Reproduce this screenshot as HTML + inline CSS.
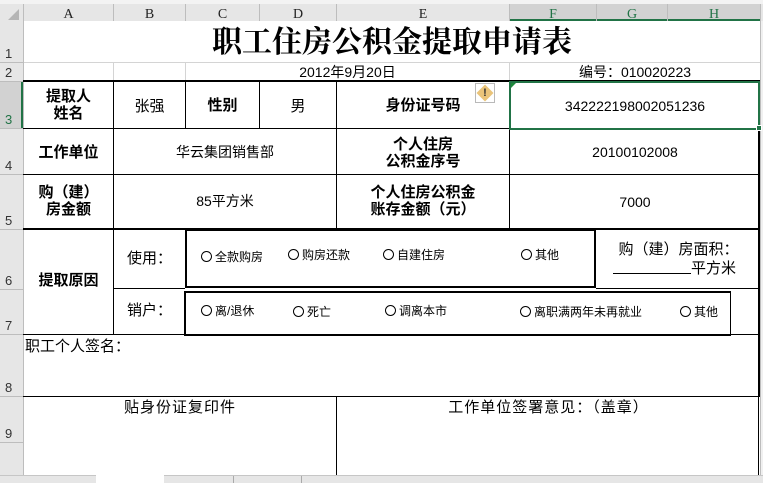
<!DOCTYPE html>
<html><head><meta charset="utf-8"><style>
*{margin:0;padding:0;box-sizing:border-box}
body{width:763px;height:483px;overflow:hidden;background:#fff;position:relative;font-family:"Liberation Sans","SimSun","WenQuanYi Zen Hei","Noto Sans CJK SC",sans-serif;color:#000}
.a{position:absolute}
.h{background:#e6e6e6;color:#222;font-family:"Liberation Serif",serif;font-size:12px;text-align:center}
.hl{position:absolute;background:#bdbdbd}
.g{position:absolute;background:#d4d4d4}
.k{position:absolute;background:#000}
.t{position:absolute;text-align:center;font-size:14px;line-height:17px;white-space:nowrap}
.b{font-weight:bold;font-size:15px}
.s{font-size:12px}
.o{display:inline-block;width:11px;height:11px;border:1px solid #000;border-radius:50%;vertical-align:-1px;margin-right:3px}
.rn{position:absolute;left:0;width:23px;font-size:13px;color:#333;text-align:left;padding-left:5px;font-family:"Liberation Sans",sans-serif}
</style></head><body>
<div class="a" style="left:0;top:0;width:763px;height:4px;background:#f3f3f3"></div>
<div class="a h" style="left:0;top:4px;width:763px;height:17px"></div>
<div class="a" style="left:509px;top:4px;width:251px;height:17px;background:#d2d2d2"></div>
<div class="a" style="left:509px;top:19px;width:251px;height:2px;background:#217346"></div>
<div class="a" style="left:8px;top:9px;width:0;height:0;border-left:11px solid transparent;border-bottom:11px solid #b5b5b5"></div>
<div class="a h" style="left:0;top:21px;width:23px;height:454px"></div>
<div class="a" style="left:0;top:81px;width:23px;height:47px;background:#d2d2d2"></div>
<div class="a" style="left:21px;top:81px;width:2px;height:47px;background:#217346"></div>
<div class="a" style="left:760px;top:21px;width:3px;height:454px;background:#f0f0f0"></div>
<div class="hl" style="left:23px;top:4px;width:1px;height:471px"></div>
<div class="hl" style="left:113px;top:4px;width:1px;height:17px"></div>
<div class="hl" style="left:185px;top:4px;width:1px;height:17px"></div>
<div class="hl" style="left:259px;top:4px;width:1px;height:17px"></div>
<div class="hl" style="left:336px;top:4px;width:1px;height:17px"></div>
<div class="hl" style="left:509px;top:4px;width:1px;height:17px"></div>
<div class="hl" style="left:596px;top:4px;width:1px;height:17px"></div>
<div class="hl" style="left:667px;top:4px;width:1px;height:17px"></div>
<div class="hl" style="left:760px;top:4px;width:1px;height:471px"></div>
<div class="t h" style="left:24px;top:6px;width:89px;background:none">A</div>
<div class="t h" style="left:114px;top:6px;width:71px;background:none">B</div>
<div class="t h" style="left:186px;top:6px;width:73px;background:none">C</div>
<div class="t h" style="left:260px;top:6px;width:76px;background:none">D</div>
<div class="t h" style="left:337px;top:6px;width:172px;background:none">E</div>
<div class="t h" style="left:510px;top:6px;width:86px;background:none;color:#217346">F</div>
<div class="t h" style="left:597px;top:6px;width:70px;background:none;color:#217346">G</div>
<div class="t h" style="left:668px;top:6px;width:92px;background:none;color:#217346">H</div>
<div class="hl" style="left:0;top:62px;width:23px;height:1px"></div>
<div class="hl" style="left:0;top:81px;width:23px;height:1px"></div>
<div class="hl" style="left:0;top:128px;width:23px;height:1px"></div>
<div class="hl" style="left:0;top:174px;width:23px;height:1px"></div>
<div class="hl" style="left:0;top:229px;width:23px;height:1px"></div>
<div class="hl" style="left:0;top:289px;width:23px;height:1px"></div>
<div class="hl" style="left:0;top:334px;width:23px;height:1px"></div>
<div class="hl" style="left:0;top:396px;width:23px;height:1px"></div>
<div class="hl" style="left:0;top:442px;width:23px;height:1px"></div>
<div class="rn" style="top:46px">1</div>
<div class="rn" style="top:65px">2</div>
<div class="rn" style="top:112px;color:#217346">3</div>
<div class="rn" style="top:158px">4</div>
<div class="rn" style="top:213px">5</div>
<div class="rn" style="top:273px">6</div>
<div class="rn" style="top:318px">7</div>
<div class="rn" style="top:380px">8</div>
<div class="rn" style="top:426px">9</div>
<div class="g" style="left:24px;top:62px;width:736px;height:1px"></div>
<div class="g" style="left:113px;top:62px;width:1px;height:19px"></div>
<div class="g" style="left:185px;top:62px;width:1px;height:19px"></div>
<div class="g" style="left:509px;top:62px;width:1px;height:19px"></div>
<div class="k" style="left:23px;top:80px;width:737px;height:2px"></div>
<div class="k" style="left:758px;top:80px;width:2px;height:316px"></div>
<div class="k" style="left:23px;top:128px;width:737px;height:1px"></div>
<div class="k" style="left:23px;top:174px;width:737px;height:1px"></div>
<div class="k" style="left:23px;top:228px;width:737px;height:2px"></div>
<div class="k" style="left:113px;top:81px;width:1px;height:253px"></div>
<div class="k" style="left:185px;top:81px;width:1px;height:47px"></div>
<div class="k" style="left:259px;top:81px;width:1px;height:47px"></div>
<div class="k" style="left:336px;top:81px;width:1px;height:148px"></div>
<div class="k" style="left:509px;top:81px;width:1px;height:148px"></div>
<div class="k" style="left:113px;top:288px;width:72px;height:1px"></div>
<div class="k" style="left:23px;top:334px;width:737px;height:1px"></div>
<div class="k" style="left:23px;top:396px;width:737px;height:1px"></div>
<div class="k" style="left:336px;top:396px;width:1px;height:79px"></div>
<div class="k" style="left:758px;top:396px;width:1px;height:79px"></div>
<div class="a" style="left:185px;top:230px;width:411px;height:58px;border:2px solid #000;border-top:1px solid #000"></div>
<div class="a" style="left:596px;top:288px;width:164px;height:1px;background:#000"></div>
<div class="a" style="left:184px;top:291px;width:547px;height:45px;border:2px solid #000;border-right-width:1px"></div>
<div class="a" style="left:509px;top:81px;width:251px;height:49px;border:2px solid #217346"></div>
<div class="a" style="left:756px;top:125px;width:6px;height:6px;background:#217346;border:1px solid #fff"></div>
<div class="a" style="left:511px;top:83px;width:0;height:0;border-top:5px solid #1d8a3a;border-right:5px solid transparent"></div>
<div class="a" style="left:475px;top:83px;width:20px;height:20px;border:1px solid #b9b9b9;background:#fff"></div>
<div class="a" style="left:479px;top:87px;width:12px;height:12px;background:#eac47a;transform:rotate(45deg)"></div>
<div class="t" style="left:475px;top:85px;width:20px;font-size:11px;font-weight:bold;color:#333">!</div>
<div class="t" style="left:24px;top:25px;width:736px;font-family:'Liberation Serif','Noto Serif CJK SC',serif;font-weight:bold;font-size:30px;line-height:36px">职工住房公积金提取申请表</div>
<div class="t" style="left:186px;top:64px;width:323px;font-size:14px;line-height:17px">2012年9月20日</div>
<div class="t" style="left:510px;top:64px;width:250px;font-size:14px">编号：010020223</div>
<div class="t b" style="left:24px;top:88px;width:89px">提取人<br>姓名</div>
<div class="t" style="left:114px;top:98px;width:71px;font-size:15px">张强</div>
<div class="t b" style="left:186px;top:97px;width:73px">性别</div>
<div class="t" style="left:260px;top:98px;width:76px;font-size:15px">男</div>
<div class="t b" style="left:337px;top:97px;width:172px">身份证号码</div>
<div class="t" style="left:510px;top:98px;width:250px">342222198002051236</div>
<div class="t b" style="left:24px;top:144px;width:89px">工作单位</div>
<div class="t" style="left:114px;top:144px;width:222px">华云集团销售部</div>
<div class="t b" style="left:337px;top:136px;width:172px">个人住房<br>公积金序号</div>
<div class="t" style="left:510px;top:144px;width:250px">20100102008</div>
<div class="t b" style="left:24px;top:184px;width:89px">购（建）<br>房金额</div>
<div class="t" style="left:114px;top:193px;width:222px">85平方米</div>
<div class="t b" style="left:337px;top:184px;width:172px">个人住房公积金<br>账存金额（元）</div>
<div class="t" style="left:510px;top:194px;width:250px">7000</div>
<div class="t b" style="left:24px;top:272px;width:89px">提取原因</div>
<div class="t" style="left:114px;top:250px;width:71px;font-size:15px">使用：</div>
<div class="t" style="left:114px;top:302px;width:71px;font-size:15px">销户：</div>
<div class="t s" style="left:201px;top:249px"><span class="o"></span>全款购房</div>
<div class="t s" style="left:288px;top:247px"><span class="o"></span>购房还款</div>
<div class="t s" style="left:383px;top:247px"><span class="o"></span>自建住房</div>
<div class="t s" style="left:521px;top:247px"><span class="o"></span>其他</div>
<div class="t" style="left:597px;top:241px;width:163px;font-size:15px">购（建）房面积：</div>
<div class="t" style="left:613px;top:260px;font-size:15px"><span style="display:inline-block;width:78px;border-bottom:1px solid #000;height:14px;vertical-align:-1px"></span>平方米</div>
<div class="t s" style="left:201px;top:303px"><span class="o"></span>离/退休</div>
<div class="t s" style="left:293px;top:304px"><span class="o"></span>死亡</div>
<div class="t s" style="left:385px;top:303px"><span class="o"></span>调离本市</div>
<div class="t s" style="left:520px;top:304px"><span class="o"></span>离职满两年未再就业</div>
<div class="t s" style="left:680px;top:304px"><span class="o"></span>其他</div>
<div class="t" style="left:25px;top:338px;font-size:15px">职工个人签名：</div>
<div class="t" style="left:24px;top:399px;width:312px;font-size:15px;letter-spacing:1px">贴身份证复印件</div>
<div class="t" style="left:337px;top:399px;width:423px;font-size:15px;letter-spacing:1px">工作单位签署意见：（盖章）</div>
<div class="a" style="left:0;top:475px;width:763px;height:8px;background:#e6e6e6;border-top:1px solid #c6c6c6"></div>
<div class="a" style="left:96px;top:475px;width:68px;height:8px;background:#fff"></div>
<div class="a" style="left:233px;top:476px;width:1px;height:7px;background:#aaa"></div>
<div class="a" style="left:301px;top:476px;width:1px;height:7px;background:#aaa"></div>
</body></html>
